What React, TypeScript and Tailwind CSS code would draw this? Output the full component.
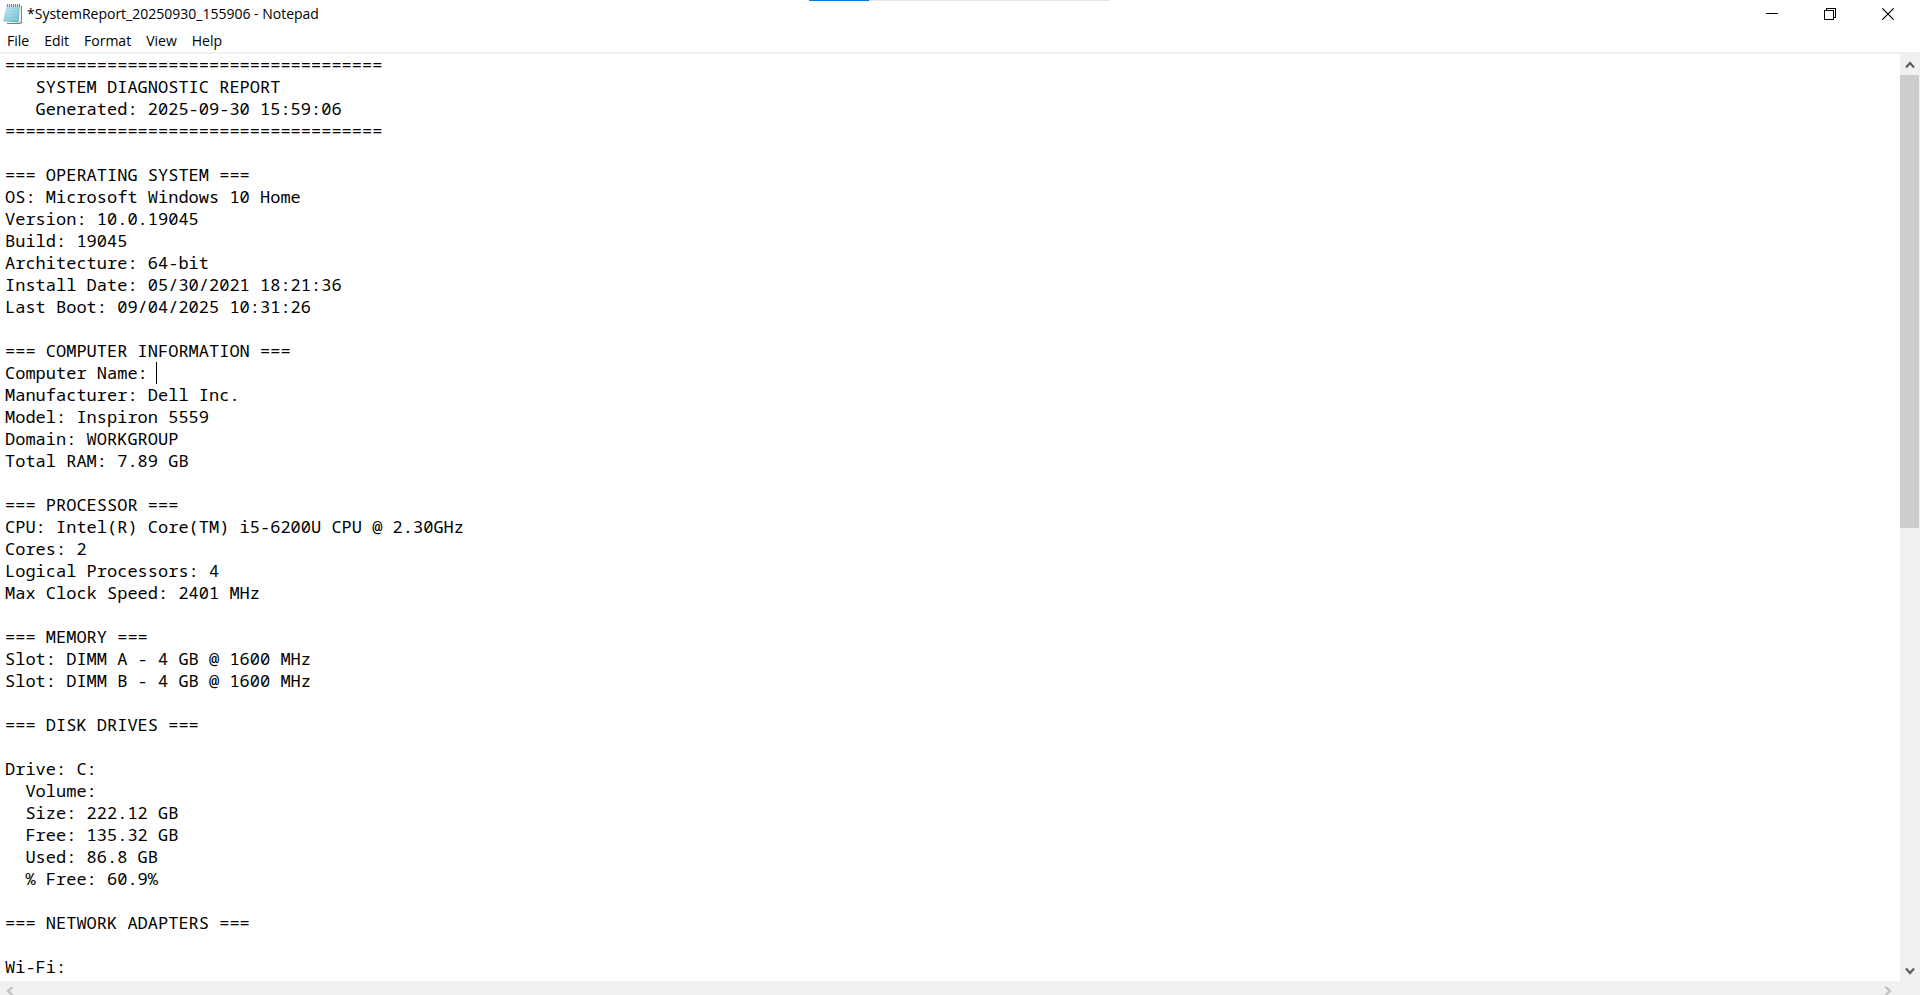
const report = `=====================================
   SYSTEM DIAGNOSTIC REPORT
   Generated: 2025-09-30 15:59:06
=====================================

=== OPERATING SYSTEM ===
OS: Microsoft Windows 10 Home
Version: 10.0.19045
Build: 19045
Architecture: 64-bit
Install Date: 05/30/2021 18:21:36
Last Boot: 09/04/2025 10:31:26

=== COMPUTER INFORMATION ===
Computer Name: 
Manufacturer: Dell Inc.
Model: Inspiron 5559
Domain: WORKGROUP
Total RAM: 7.89 GB

=== PROCESSOR ===
CPU: Intel(R) Core(TM) i5-6200U CPU @ 2.30GHz
Cores: 2
Logical Processors: 4
Max Clock Speed: 2401 MHz

=== MEMORY ===
Slot: DIMM A - 4 GB @ 1600 MHz
Slot: DIMM B - 4 GB @ 1600 MHz

=== DISK DRIVES ===

Drive: C:
  Volume: 
  Size: 222.12 GB
  Free: 135.32 GB
  Used: 86.8 GB
  % Free: 60.9%

=== NETWORK ADAPTERS ===

Wi-Fi:`;

const menus = ["File", "Edit", "Format", "View", "Help"];

function NotepadIcon() {
  return (
    <svg width="20" height="21" viewBox="0 0 20 21" aria-hidden="true">
      <defs>
        <linearGradient id="page" x1="0" y1="0" x2="1" y2="1">
          <stop offset="0" stopColor="#c9eaf2" />
          <stop offset="0.5" stopColor="#8fd0e0" />
          <stop offset="1" stopColor="#5fb4cb" />
        </linearGradient>
      </defs>
      <path d="M5 2H19V19L17 20H4Z" fill="#8d7f6c" />
      <path d="M4 2H18V18L16 19H3Z" fill="#f3efe6" />
      <path d="M3.500 2H17L15.500 18.500L0 17.500Z" fill="url(#page)" />
      <path d="M4.500 6H15M4 9H15M3.500 12H14.500M3 15H14" stroke="#b4e0eb" strokeWidth="0.7" />
      <path d="M4 2H18" stroke="#d9dee0" strokeWidth="2" />
      <path d="M4.500 0V3M6.500 0V3M8.500 0V3M10.500 0V3M12.500 0V3M14.500 0V3M16.500 0V3" stroke="#737b80" strokeWidth="0.9" />
    </svg>
  );
}

const captionButton = "flex w-[58px] items-center justify-center hover:bg-[#e5e5e5]";

function TitleBar() {
  return (
    <header className="relative flex h-[30px] shrink-0 items-stretch justify-between pb-[2px] pr-[3px]">
      <div className="flex items-center gap-[4px] pl-[3px]">
        <NotepadIcon />
        <h1 className="text-[14px] leading-[20px]">*SystemReport_20250930_155906 - Notepad</h1>
      </div>
      <div className="absolute left-[809px] top-0 flex h-px w-[301px] bg-[#e5e5e5]">
        <div className="w-1/5 bg-[#0078d7]" />
      </div>
      <div className="flex">
        <button className={captionButton} aria-label="Minimize">
          <svg width="12" height="12" viewBox="0 0 12 12" shapeRendering="crispEdges">
            <path d="M0 5.500H12" stroke="#000" />
          </svg>
        </button>
        <button className={captionButton} aria-label="Restore">
          <svg width="12" height="12" viewBox="0 0 12 12" fill="none" stroke="#000" shapeRendering="crispEdges">
            <path d="M0.500 2.500H9.500V11.500H0.500Z" />
            <path d="M2.500 2V0.500H11.500V9.500H10" />
          </svg>
        </button>
        <button className={captionButton} aria-label="Close">
          <svg width="12" height="12" viewBox="0 0 12 12" stroke="#000" strokeWidth="1.200">
            <path d="M0.300 0.300L11.700 11.700M11.700 0.300L0.300 11.700" />
          </svg>
        </button>
      </div>
    </header>
  );
}

function Chevron({ d, color, w, h }: { d: string; color: string; w: number; h: number }) {
  return (
    <svg width={w} height={h} viewBox={`0 0 ${w} ${h}`} fill="none" stroke={color} strokeWidth="2.200">
      <path d={d} />
    </svg>
  );
}

export default function App() {
  return (
    <div className="flex h-screen flex-col overflow-hidden bg-white font-['Open_Sans','Noto_Sans',sans-serif] text-black">
      <TitleBar />
      <nav className="flex h-[24px] shrink-0 gap-px border-b-2 border-[#f0f0f0]">
        {menus.map((name) => (
          <button key={name} className="px-[7px] text-[14px] leading-[22px] hover:bg-[#e5f3ff]">
            {name}
          </button>
        ))}
      </nav>
      <main className="flex min-h-0 flex-1">
        <div className="relative min-w-0 flex-1 font-['Noto_Sans_Mono','DejaVu_Sans_Mono',monospace] text-[17px] leading-[22px]">
          <textarea
            aria-label="Text editor"
            wrap="off"
            spellCheck={false}
            defaultValue={report}
            className="block h-full w-full resize-none overflow-hidden pl-[5px] caret-transparent outline-none"
          />
          <span className="absolute left-[calc(15ch+3px)] top-[308px] h-[22px] w-px bg-black" />
        </div>
        <div className="flex w-[20px] shrink-0 flex-col bg-[#f0f0f0]">
          <button className="flex h-[21px] items-center justify-center" aria-label="Scroll up">
            <Chevron d="M1 6.500L5 2L9 6.500" color="#606060" w={10} h={8} />
          </button>
          <div className="min-h-0 flex-1 pr-px">
            <div className="h-[calc(51%+2px)] bg-[#cdcdcd]" />
          </div>
          <button className="flex h-[21px] items-center justify-center" aria-label="Scroll down">
            <Chevron d="M1 1.500L5 6L9 1.500" color="#606060" w={10} h={8} />
          </button>
        </div>
      </main>
      <footer className="flex h-[14px] shrink-0 justify-between overflow-hidden bg-[#f0f0f0] pr-[20px]">
        <button className="flex w-[20px] justify-center pt-[5px]" aria-label="Scroll left">
          <Chevron d="M6.500 1L2 5L6.500 9" color="#bfbfbf" w={8} h={10} />
        </button>
        <button className="flex w-[24px] justify-center pt-[5px]" aria-label="Scroll right">
          <Chevron d="M1.500 1L6 5L1.500 9" color="#bfbfbf" w={8} h={10} />
        </button>
      </footer>
    </div>
  );
}
